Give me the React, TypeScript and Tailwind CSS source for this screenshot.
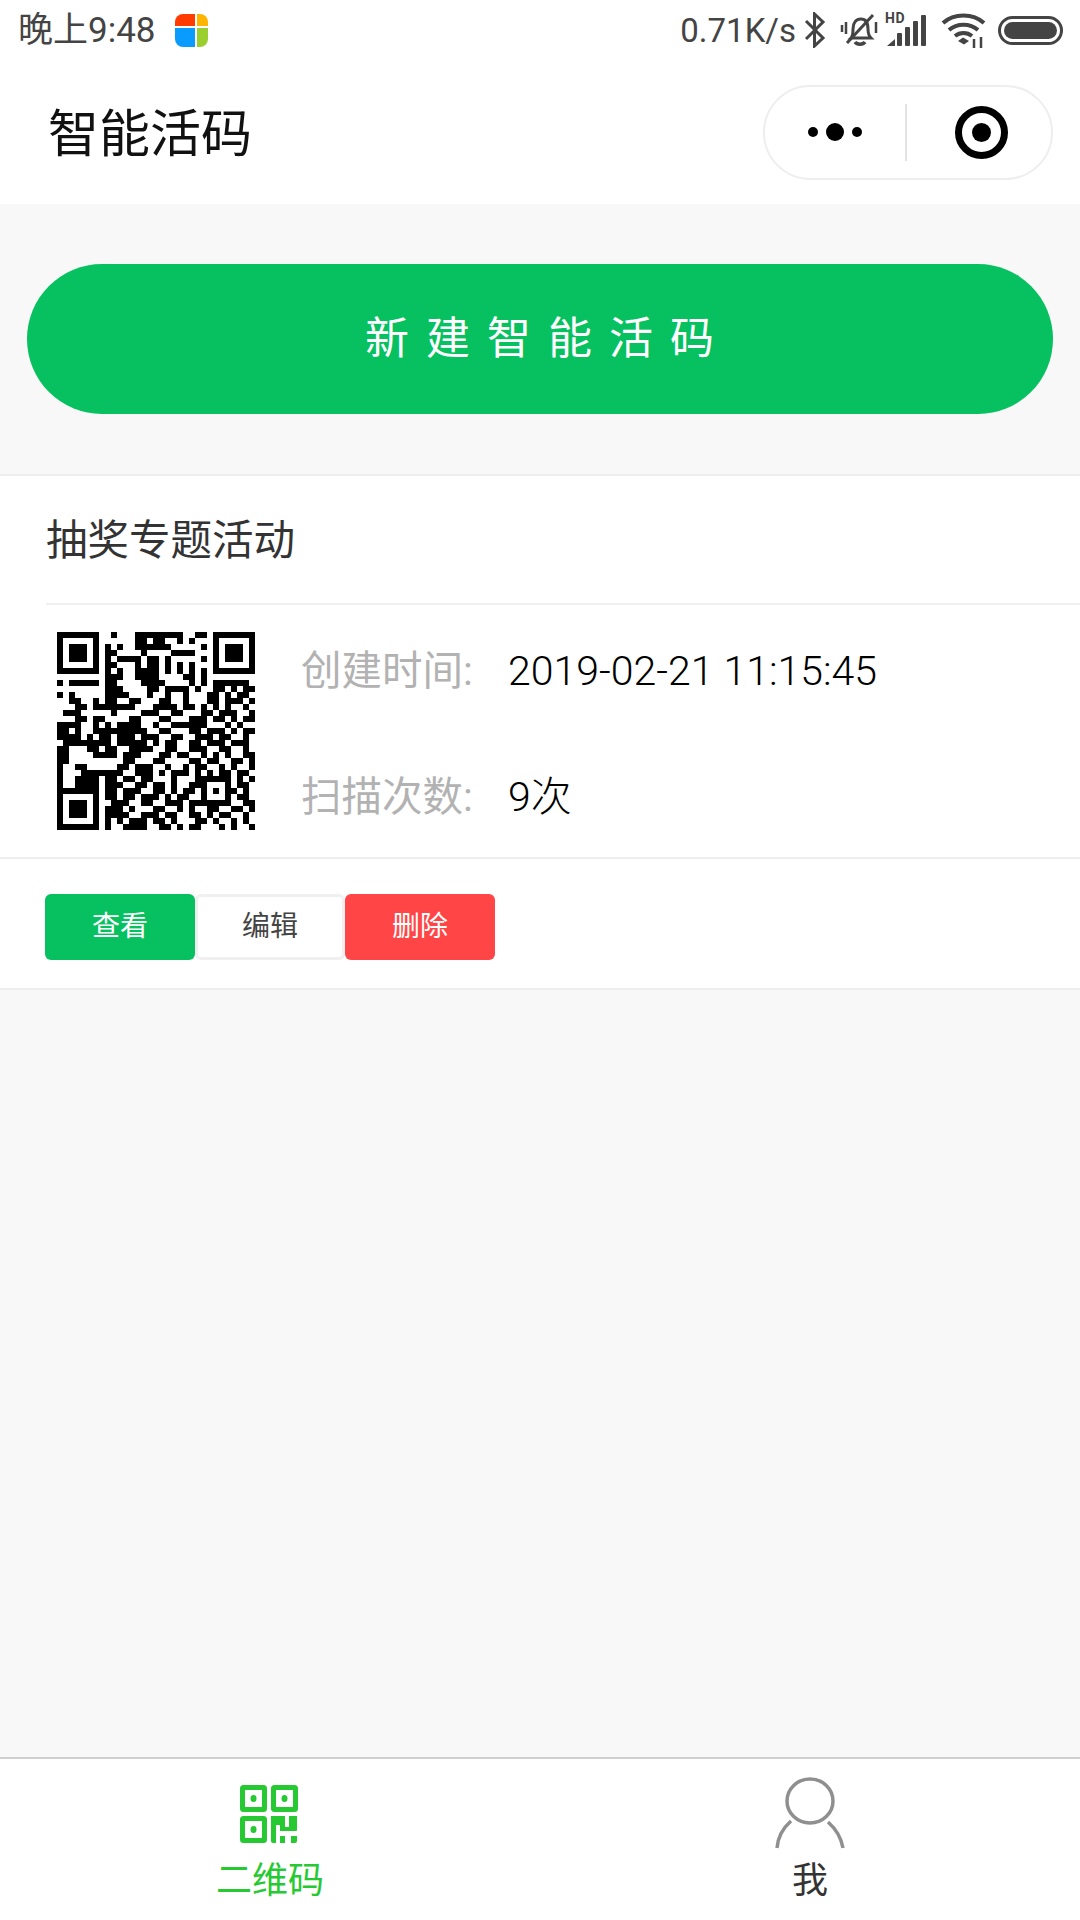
const F = "1111111", G = "1000001", C = "1011101";
const QR = [
F + "0" + "01000111111110011" + "0" + F,
G + "0" + "00000110110010100" + "0" + G,
C + "0" + "10100111111000001" + "0" + C,
C + "0" + "11000010000111100" + "0" + C,
C + "0" + "10111101101000001" + "0" + C,
G + "0" + "11000101101010100" + "0" + G,
F + "0" + "10100111101010101" + "0" + F,
"00000000" + "11100111100001101" + "00000000",
"10111110" + "11000011110000101" + "01111110",
"00000000" + "11100001101111010" + "01101011",
"10100000" + "11110001001001000" + "11010110",
"00110010" + "11001100011001000" + "11011101",
"00011011" + "11111000111101101" + "01010010",
"01110000" + "01000011100110001" + "10111001",
"00011011" + "00001100011000111" + "01101011",
"11110010" + "10111100100111111" + "00010100",
"11010011" + "11111110011000110" + "11101011",
"11110101" + "10111011100110011" + "10110010",
"01111111" + "10111110101100110" + "11101110",
"11000110" + "11001111001100111" + "00110010",
"11000011" + "11011100011011001" + "01010011",
"11000000" + "00011000110000110" + "11001101",
"10011000" + "00110111001001011" + "00101001",
"10001111" + "11100111010111010" + "10110110",
"10011110" + "11011011000100011" + "11110101",
"10011110" + "11100110110100111" + "00010110",
F + "0" + "11011100110101101" + "01011010",
G + "0" + "11011011101011001" + "00010110",
C + "0" + "01110011001110111" + "11110011",
C + "0" + "11101000110010100" + "11001101",
C + "0" + "11110011101100110" + "10110010",
G + "0" + "10101110110100011" + "01001010",
F + "0" + "10011110011010110" + "00101001",
];

function QrCode() {
  return (
    <svg width="198" height="198" viewBox="0 0 33 33" shapeRendering="crispEdges" className="block">
      {QR.map((row, y) =>
        row.split("").map((c, x) =>
          c === "1" ? <rect key={x + "-" + y} x={x} y={y} width="1" height="1" fill="#000" /> : null
        )
      )}
    </svg>
  );
}

function Logo() {
  return (
    <svg width="33" height="33" viewBox="0 0 33 33">
      <path d="M0 12V8a8 8 0 0 1 8-8h12v12z" fill="#ff3b00" />
      <path d="M22 0h3a8 8 0 0 1 8 8v4H22z" fill="#ffb400" />
      <path d="M0 14h20v19H8a8 8 0 0 1-8-8z" fill="#0a9bff" />
      <path d="M22 14h11v11a8 8 0 0 1-8 8h-3z" fill="#9bcf2e" />
    </svg>
  );
}

function StatusIcons() {
  return (
    <div className="flex items-center">
      <svg width="22" height="36" viewBox="0 0 22 36" fill="none" stroke="#444" strokeWidth="3" className="ml-[8px]">
        <path d="M2 9l17 17-8.5 8V2l8.5 8L2 27" />
      </svg>
      <svg width="38" height="34" viewBox="0 0 38 34" fill="none" stroke="#444" strokeWidth="3" className="ml-[14px]">
        <path d="M11 25c2-2 2-6 2-9 0-6 3-10 8-10 5 0 7 4 7 10 0 3 1 7 3 9z" />
        <path d="M15 29c2 3 8 3 10 0" strokeWidth="3.5" />
        <path d="M7 30L33 2" />
        <path d="M2 12v7M6 9v12M36 9v11" strokeWidth="2.5" />
      </svg>
      <svg width="42" height="40" viewBox="0 0 42 40" className="ml-[7px]">
        <text x="0" y="13" fontSize="14" fontWeight="700" letterSpacing="0.5" fontFamily="Roboto, sans-serif" fill="#444">HD</text>
        <path d="M2 36l8-7v7z" fill="#444" />
        <rect x="12" y="23" width="5" height="13" rx="1" fill="#444" />
        <rect x="20" y="17" width="5" height="19" rx="1" fill="#444" />
        <rect x="28" y="11" width="5" height="25" rx="1" fill="#444" />
        <rect x="36" y="5" width="5" height="31" rx="1" fill="#444" />
      </svg>
      <svg width="46" height="36" viewBox="0 0 46 36" fill="none" stroke="#444" strokeWidth="4" className="ml-[14px]">
        <path d="M2 11c11-10 30-10 41 0" />
        <path d="M8 18c8-7 21-7 29 0" />
        <path d="M14 24c5-4 12-4 17 0" />
        <path d="M17 29l5-3.5 6 3.5-5 3.500z" fill="#444" stroke="none" />
        <path d="M33 36v-9M40 36v-11" strokeWidth="2.5" />
      </svg>
      <div className="ml-[11px] flex h-[29px] w-[65px] items-center rounded-full border-[3px] border-[#444] p-[3px]">
        <div className="h-full w-full rounded-full bg-[#444]" />
      </div>
    </div>
  );
}

function QrTabIcon() {
  return (
    <svg width="60" height="58" viewBox="0 0 60 58" className="block">
      <g fill="none" stroke="#26c932" strokeWidth="5">
        <rect x="2.500" y="2.500" width="22" height="22" rx="1" />
        <rect x="33.500" y="2.500" width="22" height="22" rx="1" />
        <rect x="2.500" y="33.500" width="22" height="22" rx="1" />
      </g>
      <g fill="#26c932">
        <ellipse cx="13.500" cy="13.500" rx="3" ry="3.500" />
        <ellipse cx="44.500" cy="13.500" rx="3" ry="3.500" />
        <ellipse cx="13.500" cy="44.500" rx="3" ry="3.500" />
        <path d="M31 31h14v11h4V31h8v14a1 1 0 0 1-1 1H40v-6h-4v18h-3a2 2 0 0 1-2-2z" />
        <rect x="40" y="51" width="5" height="7" />
        <path d="M51 51h6v5a2 2 0 0 1-2 2h-4z" />
      </g>
    </svg>
  );
}

function PersonIcon() {
  return (
    <svg width="70" height="72" viewBox="0 0 70 72" fill="none" stroke="#8f8f8f" strokeWidth="3.500" className="block">
      <ellipse cx="35" cy="24" rx="23" ry="22" />
      <path d="M2 71c1-12 6-20 14-27" />
      <path d="M53 45c8 7 13 15 15 26" />
    </svg>
  );
}

const font = { fontFamily: "Roboto, 'Noto Sans CJK SC', sans-serif" };

export default function App() {
  return (
    <div className="flex h-[1920px] w-[1080px] flex-col overflow-hidden bg-[#f8f8f8]" style={font}>
      <div className="bg-white">
        <div className="flex h-[60px] items-center justify-between pl-[18px] pr-[17px] text-[#444]">
          <div className="flex items-center">
            <span className="pt-[2px] text-[35px]">晚上9:48</span>
            <span className="ml-[19px]"><Logo /></span>
          </div>
          <div className="flex items-center">
            <span className="pt-[2px] text-[33px]">0.71K/s</span>
            <StatusIcons />
          </div>
        </div>
        <div className="flex h-[144px] items-center justify-between pl-[48px] pr-[27px]">
          <span className="mt-[6px] text-[51px] text-[#111]">智能活码</span>
          <div className="flex h-[95px] w-[290px] items-center rounded-full border-2 border-[#eeeeee]">
            <div className="flex flex-1 items-center justify-center gap-[8px]">
              <span className="h-[10px] w-[10px] rounded-full bg-black" />
              <span className="h-[18px] w-[18px] rounded-full bg-black" />
              <span className="h-[10px] w-[10px] rounded-full bg-black" />
            </div>
            <div className="h-[57px] w-[2px] bg-[#e2e2e2]" />
            <div className="flex flex-1 items-center justify-center pl-[5px]">
              <div className="flex h-[53px] w-[53px] items-center justify-center rounded-full border-[7px] border-black">
                <span className="h-[19px] w-[19px] rounded-full bg-black" />
              </div>
            </div>
          </div>
        </div>
      </div>

      <div className="px-[27px] pt-[60px] pb-[60px]">
        <div className="flex h-[150px] items-center justify-center rounded-full bg-[#07c160] pl-[16px] text-[44px] tracking-[17px] text-white">
          新建智能活码
        </div>
      </div>

      <div className="border-y-2 border-[#eeeeee] bg-white">
        <div className="flex h-[127px] items-center pl-[46px] pt-[4px] text-[41.5px] text-[#333]">抽奖专题活动</div>
        <div className="ml-[46px] h-[2px] bg-[#f0f0f0]" />
        <div className="flex h-[254px] items-center border-b-2 border-[#eeeeee] pl-[57px]">
          <QrCode />
          <div className="ml-[46px] mt-[5px] flex h-[174px] flex-col justify-between text-[40.5px] leading-[48px]">
            <div className="flex items-center">
              <span className="w-[207px] text-[#b2b2b2]">创建时间:</span>
              <span className="text-[41px] font-light text-black">2019-02-21 11:15:45</span>
            </div>
            <div className="flex items-center">
              <span className="w-[207px] text-[#b2b2b2]">扫描次数:</span>
              <span className="text-[41px] font-light text-black">9次</span>
            </div>
          </div>
        </div>
        <div className="flex h-[129px] items-start pl-[45px] pt-[35px] text-[28px]">
          <div className="flex h-[66px] w-[150px] items-center justify-center rounded-[6px] bg-[#07c160] text-white">查看</div>
          <div className="flex h-[66px] w-[150px] items-center justify-center rounded-[6px] border-[3px] border-[#f0f0f0] bg-white text-[#444]">编辑</div>
          <div className="flex h-[66px] w-[150px] items-center justify-center rounded-[6px] bg-[#ff4545] text-white">删除</div>
        </div>
      </div>

      <div className="flex-1" />

      <div className="flex h-[163px] border-t-2 border-[#cfcfcf] bg-white">
        <div className="flex w-[540px] flex-col items-center">
          <div className="mt-[26px]"><QrTabIcon /></div>
          <span className="mt-[18px] text-[36px] leading-[40px] text-[#26c932]">二维码</span>
        </div>
        <div className="flex w-[540px] flex-col items-center">
          <div className="mt-[18px]"><PersonIcon /></div>
          <span className="mt-[12px] text-[36px] leading-[40px] text-[#333]">我</span>
        </div>
      </div>
    </div>
  );
}
